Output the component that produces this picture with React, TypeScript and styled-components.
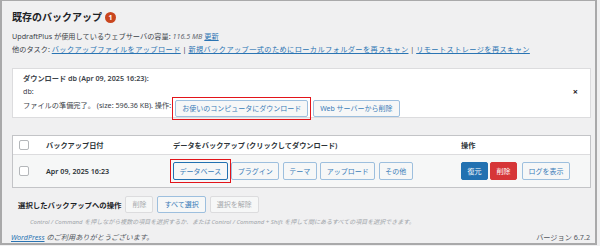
import React from 'react'
import styled, { createGlobalStyle, css } from 'styled-components'

const GlobalStyle = createGlobalStyle`
  html, body {
    margin: 0;
    padding: 0;
    background: #f0f0f1;
  }
  body {
    font-family: "Noto Sans", "Noto Sans CJK JP", sans-serif;
    color: #1d2327;
  }
`

const Frame = styled.div`
  width: 597px;
  height: 245px;
  box-sizing: border-box;
  border: 2px solid #a9a9aa;
  border-top-width: 1px;
  padding: 8px 4px 0 10px;
  display: flex;
  flex-direction: column;
  overflow: hidden;
  font-size: 7.2px;
`

const TitleRow = styled.div`
  display: flex;
  align-items: center;
  gap: 3px;
  height: 16px;
`

const Title = styled.h2`
  margin: 0;
  font-size: 10px;
  font-weight: 700;
  line-height: 16px;
`

const Badge = styled.span`
  display: inline-flex;
  align-items: center;
  justify-content: center;
  width: 11px;
  height: 11px;
  border-radius: 50%;
  background: #c9461f;
  color: #fff;
  font-size: 7px;
  font-weight: 700;
`

const Meta = styled.div`
  margin-top: 5px;
  line-height: 13px;
  color: #3c434a;
`

const Link = styled.a<{ $wide?: boolean }>`
  color: #2a74b3;
  text-decoration: underline;
  ${p => p.$wide && 'letter-spacing: 0.4px;'}
`

const Muted = styled.em`
  color: #646970;
`

const Notice = styled.div`
  position: relative;
  margin-top: 12px;
  height: 58px;
  box-sizing: border-box;
  padding: 3px 10px 0;
  background: #fff;
  border: 1px solid #dcdcde;
`

const NoticeHeading = styled.div`
  line-height: 12px;
  font-weight: 600;
  color: #3c434a;
`

const NoticeLine = styled.div`
  margin-top: 2px;
  line-height: 11px;
  color: #3c434a;
`

const NoticeActions = styled.div`
  display: flex;
  align-items: flex-start;
  gap: 5px;
  padding-top: 3px;
`

const NoticeText = styled.span`
  line-height: 12px;
  color: #3c434a;
  margin-top: -1px;
  margin-right: -1px;
`

const Dismiss = styled.span`
  position: absolute;
  right: 12px;
  top: 18px;
  font-size: 9px;
  font-weight: 700;
  line-height: 10px;
  color: #1d2327;
`

type Variant = 'secondary' | 'primary' | 'danger' | 'disabled'

const variants = {
  secondary: css`
    background: #f6f7f7;
    border-color: #9dbfde;
    color: #3a7cb8;
  `,
  primary: css`
    background: #2271b1;
    border-color: #2271b1;
    color: #fff;
  `,
  danger: css`
    background: #d63638;
    border-color: #d63638;
    color: #fff;
  `,
  disabled: css`
    background: #f6f7f7;
    border-color: #dcdcde;
    color: #a7aaad;
  `,
}

const Button = styled.button<{ $variant?: Variant; $marked?: boolean; $focused?: boolean; $tall?: boolean }>`
  position: relative;
  box-sizing: border-box;
  height: ${p => (p.$tall ? 18 : 17)}px;
  padding: 0 ${p => (p.$tall ? 5.5 : 6)}px;
  font-family: inherit;
  font-size: 7px;
  line-height: 1;
  border: 1px solid;
  border-radius: 2px;
  white-space: nowrap;
  ${p => variants[p.$variant || 'secondary']}
  ${p => p.$focused && 'border-color: #2271b1;'}
  ${p =>
    p.$marked &&
    css`
      &::after {
        content: '';
        position: absolute;
        top: -4px;
        bottom: -4px;
        left: -4px;
        right: -4px;
        border: 1px solid #e2141a;
      }
    `}
`

const Table = styled.div`
  margin-top: 17px;
  border: 1px solid #c3c4c7;
  background: #fff;
`

const Row = styled.div<{ $head?: boolean }>`
  display: grid;
  grid-template-columns: 25px 127px 288px 1fr;
  align-items: center;
  height: ${p => (p.$head ? 18 : 32)}px;
  background: ${p => (p.$head ? '#fff' : '#f6f7f7')};
  ${p => p.$head && 'border-bottom: 1px solid #dcdcde;'}
`

const Cell = styled.div<{ $bold?: boolean }>`
  padding-left: 8px;
  display: flex;
  align-items: center;
  gap: 3.5px;
  font-weight: ${p => (p.$bold ? 600 : 400)};
  color: #2c3338;
`

const CheckCell = styled.div`
  padding-left: 6px;
  display: flex;
  align-items: center;
`

const Checkbox = styled.span`
  display: inline-block;
  width: 10px;
  height: 10px;
  box-sizing: border-box;
  border: 1px solid #b4b7ba;
  border-radius: 2px;
  background: #fff;
`

const Actions = styled.div`
  padding-left: 8px;
  display: flex;
  align-items: center;
  gap: 2px;
`

const BulkRow = styled.div`
  display: flex;
  align-items: center;
  gap: 4px;
  margin-top: 8px;
  padding-left: 6px;
`

const BulkLabel = styled.span`
  font-size: 7.4px;
  font-weight: 700;
`

const Hint = styled.div`
  margin-top: 4px;
  padding-left: 18px;
  line-height: 10px;
  font-size: 6px;
  font-style: italic;
  color: #a0a5aa;
  white-space: nowrap;
`

const Footer = styled.div`
  display: flex;
  justify-content: space-between;
  margin: 4px 0 0 -1px;
  line-height: 12px;
  color: #50575e;
`

const Thanks = styled.span`
  font-style: italic;
`

const Version = styled.span`
  margin-right: 1px;
`

export default function App() {
  return (
    <>
      <GlobalStyle />
      <Frame>
        <TitleRow>
          <Title>既存のバックアップ</Title>
          <Badge>1</Badge>
        </TitleRow>
        <Meta>
          <div>
            UpdraftPlus が使用しているウェブサーバの容量: <Muted>116.5 MB</Muted> <Link>更新</Link>
          </div>
          <div>
            他のタスク: <Link $wide>バックアップファイルをアップロード</Link> | <Link $wide>新規バックアップ一式のためにローカルフォルダーを再スキャン</Link> | <Link $wide>リモートストレージを再スキャン</Link>
          </div>
        </Meta>

        <Notice>
          <NoticeHeading>ダウンロード db (Apr 09, 2025 16:23):</NoticeHeading>
          <NoticeLine>db:</NoticeLine>
          <NoticeActions>
            <NoticeText>ファイルの準備完了。 (size: 596.36 KB). 操作:</NoticeText>
            <Button $marked>お使いのコンピュータにダウンロード</Button>
            <Button>Web サーバーから削除</Button>
          </NoticeActions>
          <Dismiss>×</Dismiss>
        </Notice>

        <Table>
          <Row $head>
            <CheckCell><Checkbox /></CheckCell>
            <Cell $bold>バックアップ日付</Cell>
            <Cell $bold>データをバックアップ (クリックしてダウンロード)</Cell>
            <Cell $bold>操作</Cell>
          </Row>
          <Row>
            <CheckCell><Checkbox /></CheckCell>
            <Cell $bold>Apr 09, 2025 16:23</Cell>
            <Cell>
              <Button $tall $marked $focused>データベース</Button>
              <Button $tall>プラグイン</Button>
              <Button $tall>テーマ</Button>
              <Button $tall>アップロード</Button>
              <Button $tall>その他</Button>
            </Cell>
            <Actions>
              <Button $tall $variant="primary">復元</Button>
              <Button $tall $variant="danger">削除</Button>
              <Button $tall style={{ marginLeft: 3 }}>ログを表示</Button>
            </Actions>
          </Row>
        </Table>

        <BulkRow>
          <BulkLabel>選択したバックアップへの操作</BulkLabel>
          <Button $variant="disabled">削除</Button>
          <Button>すべて選択</Button>
          <Button $variant="disabled">選択を解除</Button>
        </BulkRow>
        <Hint>
          Control / Command を押しながら複数の項目を選択するか、または Control / Command + Shift を押して間にあるすべての項目を選択できます。
        </Hint>

        <Footer>
          <Thanks><Link>WordPress</Link> のご利用ありがとうございます。</Thanks>
          <Version>バージョン 6.7.2</Version>
        </Footer>
      </Frame>
    </>
  )
}
